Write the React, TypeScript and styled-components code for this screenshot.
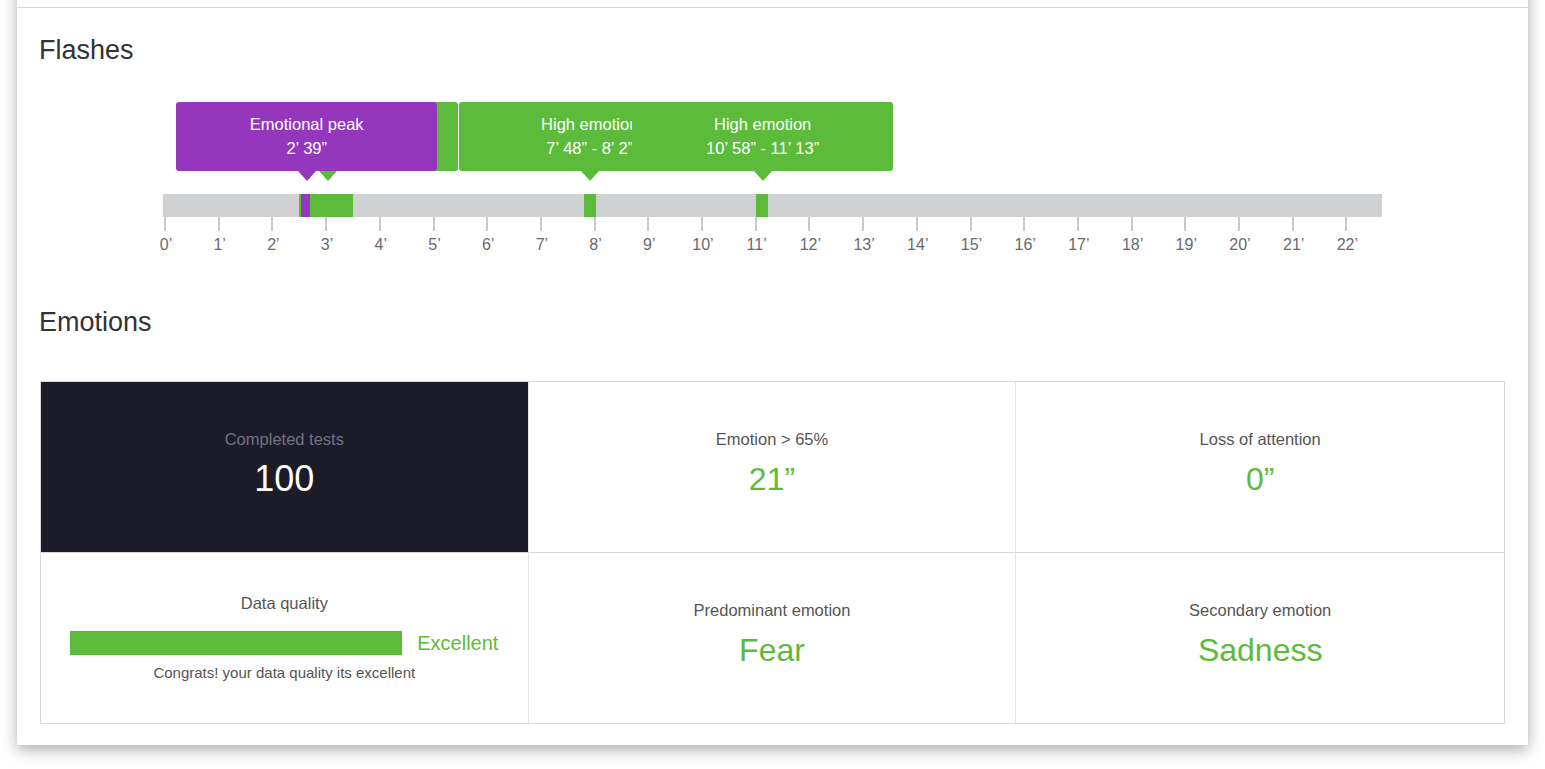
import React from 'react';
import styled, {createGlobalStyle} from 'styled-components';

const GREEN = '#5dbb3b';
const PURPLE = '#9437bd';
const PX_PER_MIN = 53.7;
const BAR_WIDTH = 1219;

// minutes -> px from the bar's left edge (0' tick sits 2px in)
const toPx = (min: number) => 2 + (min * PX_PER_MIN);

type Segment = {from: number; to: number; color: string};
type Flash = {at: number; color: string; title?: string; time?: string};

const segments: Segment[] = [
    {from: 2.495, to: 2.535, color: GREEN},
    {from: 2.535, to: 2.7, color: PURPLE},
    {from: 2.7, to: 3.5, color: GREEN},
    {from: 7.8, to: 8.03, color: GREEN},
    {from: 11.0, to: 11.23, color: GREEN},
];

const flashes: Flash[] = [
    {at: 3.02, color: GREEN},
    {at: 2.63, color: PURPLE, title: 'Emotional peak', time: '2’ 39”'},
    {at: 7.9, color: GREEN, title: 'High emotion', time: '7’ 48” - 8’ 2”'},
    {at: 11.12, color: GREEN, title: 'High emotion', time: '10’ 58” - 11’ 13”'},
];

const GlobalStyle = createGlobalStyle`
    html, body {
        margin: 0;
        padding: 0;
        background: #ffffff;
    }
    body {
        font-family: 'Liberation Sans', Arial, Helvetica, sans-serif;
        overflow: hidden;
    }
`;

const Page = styled.div`
    padding: 0 17px 30px 17px;
`;

const Card = styled.div`
    margin-top: -20px;
    background: #ffffff;
    box-shadow: 0 5px 14px rgba(0, 0, 0, 0.32);
`;

const PrevSection = styled.div`
    height: 27px;
    border-bottom: 1px solid #d8d8d8;
`;

const Content = styled.div`
    padding: 0 23px 21px 23px;
`;

const Heading = styled.h2<{$top: number}>`
    margin: ${(p) => p.$top}px 0 0 -1px;
    font-size: 27px;
    line-height: 32px;
    font-weight: 400;
    color: #333333;
`;

const Timeline = styled.div`
    position: relative;
    margin: 36px 0 0 123px;
    padding-top: 92px;
    width: ${BAR_WIDTH}px;
`;

const Bar = styled.div`
    position: relative;
    height: 23px;
    background: #d0d1d3;
`;

const BarSegment = styled.div<{$color: string}>`
    position: absolute;
    top: 0;
    bottom: 0;
    background: ${(p) => p.$color};
`;

const TickRow = styled.div`
    position: relative;
    height: 38px;
`;

const Tick = styled.div`
    position: absolute;
    top: 0;
    width: 2px;
    height: 14px;
    background: #c9c9c9;
`;

const TickLabel = styled.span`
    position: absolute;
    top: 18px;
    width: 40px;
    margin-left: -19px;
    text-align: center;
    font-size: 16px;
    line-height: 20px;
    color: #6a6a6a;
`;

const Tooltip = styled.div<{$color: string}>`
    position: absolute;
    top: 0;
    width: 261px;
    height: 69px;
    margin-left: -130px;
    box-sizing: border-box;
    padding-top: 10px;
    border-radius: 3px;
    background: ${(p) => p.$color};
    color: #ffffff;
    text-align: center;
    font-size: 16.5px;
    line-height: 24px;

    &::after {
        content: '';
        position: absolute;
        left: 50%;
        bottom: -10px;
        margin-left: -9px;
        border-left: 9px solid transparent;
        border-right: 9px solid transparent;
        border-top: 10px solid ${(p) => p.$color};
    }
`;

const Grid = styled.div`
    margin-top: 43px;
    display: grid;
    grid-template-columns: repeat(3, 1fr);
    grid-template-rows: 171px 170px;
    border: 1px solid #d9d9d9;
`;

const Cell = styled.div<{$dark?: boolean; $last?: boolean; $top?: boolean; $offset?: number}>`
    display: flex;
    flex-direction: column;
    align-items: center;
    justify-content: center;
    box-sizing: border-box;
    padding-bottom: ${(p) => p.$offset ?? 8}px;
    background: ${(p) => (p.$dark ? '#1c1b28' : '#ffffff')};
    border-right: ${(p) => (p.$last ? 'none' : '1px solid #e4e4e4')};
    border-bottom: ${(p) => (p.$top ? '1px solid #d9d9d9' : 'none')};
`;

const Label = styled.div<{$dark?: boolean}>`
    font-size: 16.5px;
    line-height: 20px;
    color: ${(p) => (p.$dark ? '#727283' : '#555555')};
`;

const Value = styled.div<{$dark?: boolean; $size?: number}>`
    margin-top: 11px;
    font-size: ${(p) => p.$size ?? 32}px;
    line-height: 38px;
    color: ${(p) => (p.$dark ? '#ffffff' : GREEN)};
`;

const QualityRow = styled.div`
    display: flex;
    align-items: center;
    gap: 15px;
    margin-top: 18px;
`;

const QualityBar = styled.div`
    width: 332px;
    height: 24px;
    background: ${GREEN};
`;

const QualityText = styled.span`
    font-size: 20px;
    line-height: 24px;
    color: ${GREEN};
`;

const Note = styled.div`
    margin-top: 8px;
    font-size: 15px;
    line-height: 20px;
    color: #555555;
`;

const ticks = Array.from({length: 23}, (_, i) => i);

const App = (): JSX.Element => (
    <>
        <GlobalStyle/>
        <Page>
            <Card>
                <PrevSection/>
                <Content>
                    <Heading $top={26}>{'Flashes'}</Heading>
                    <Timeline>
                        {flashes.map((flash) => (
                            <Tooltip
                                key={flash.at}
                                $color={flash.color}
                                style={{left: toPx(flash.at)}}
                            >
                                {flash.title && <div>{flash.title}</div>}
                                {flash.time && <div>{flash.time}</div>}
                            </Tooltip>
                        ))}
                        <Bar>
                            {segments.map((seg) => (
                                <BarSegment
                                    key={seg.from}
                                    $color={seg.color}
                                    style={{left: toPx(seg.from), width: (seg.to - seg.from) * PX_PER_MIN}}
                                />
                            ))}
                        </Bar>
                        <TickRow>
                            {ticks.map((i) => (
                                <React.Fragment key={i}>
                                    <Tick style={{left: toPx(i) - 1}}/>
                                    <TickLabel style={{left: toPx(i)}}>{`${i}’`}</TickLabel>
                                </React.Fragment>
                            ))}
                        </TickRow>
                    </Timeline>

                    <Heading $top={51}>{'Emotions'}</Heading>
                    <Grid>
                        <Cell
                            $dark={true}
                            $top={true}
                        >
                            <Label $dark={true}>{'Completed tests'}</Label>
                            <Value
                                $dark={true}
                                $size={36}
                            >
                                {'100'}
                            </Value>
                        </Cell>
                        <Cell $top={true}>
                            <Label>{'Emotion > 65%'}</Label>
                            <Value>{'21”'}</Value>
                        </Cell>
                        <Cell
                            $top={true}
                            $last={true}
                        >
                            <Label>{'Loss of attention'}</Label>
                            <Value>{'0”'}</Value>
                        </Cell>
                        <Cell $offset={0}>
                            <Label>{'Data quality'}</Label>
                            <QualityRow>
                                <QualityBar/>
                                <QualityText>{'Excellent'}</QualityText>
                            </QualityRow>
                            <Note>{'Congrats! your data quality its excellent'}</Note>
                        </Cell>
                        <Cell>
                            <Label>{'Predominant emotion'}</Label>
                            <Value>{'Fear'}</Value>
                        </Cell>
                        <Cell $last={true}>
                            <Label>{'Secondary emotion'}</Label>
                            <Value>{'Sadness'}</Value>
                        </Cell>
                    </Grid>
                </Content>
            </Card>
        </Page>
    </>
);

export default App;
